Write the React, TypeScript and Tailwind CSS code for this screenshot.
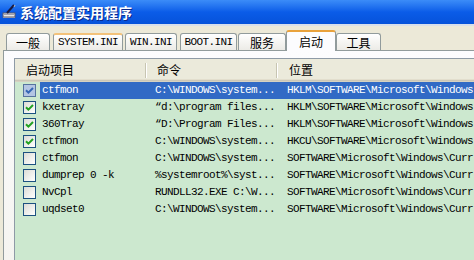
import React from "react";

type Row = { name: string; cmd: string; loc: string; checked: boolean; sel?: boolean };

const rows: Row[] = [
  { name: "ctfmon", cmd: "C:\\WINDOWS\\system...", loc: "HKLM\\SOFTWARE\\Microsoft\\Windows", checked: true, sel: true },
  { name: "kxetray", cmd: "\u201Cd:\\program files...", loc: "HKLM\\SOFTWARE\\Microsoft\\Windows", checked: true },
  { name: "360Tray", cmd: "\u201CD:\\Program Files...", loc: "HKLM\\SOFTWARE\\Microsoft\\Windows", checked: true },
  { name: "ctfmon", cmd: "C:\\WINDOWS\\system...", loc: "HKCU\\SOFTWARE\\Microsoft\\Windows", checked: true },
  { name: "ctfmon", cmd: "C:\\WINDOWS\\system...", loc: "SOFTWARE\\Microsoft\\Windows\\Curr", checked: false },
  { name: "dumprep 0 -k", cmd: "%systemroot%\\syst...", loc: "SOFTWARE\\Microsoft\\Windows\\Curr", checked: false },
  { name: "NvCpl", cmd: "RUNDLL32.EXE C:\\W...", loc: "SOFTWARE\\Microsoft\\Windows\\Curr", checked: false },
  { name: "uqdset0", cmd: "C:\\WINDOWS\\system...", loc: "SOFTWARE\\Microsoft\\Windows\\Curr", checked: false },
];

function CheckBox({ checked, sel }: { checked: boolean; sel?: boolean }) {
  return (
    <div
      className={
        sel
          ? "w-[13px] h-[13px] border border-[#56739f] bg-[#b3c5e3] flex items-center justify-center"
          : "w-[13px] h-[13px] border border-[#1c5180] bg-gradient-to-br from-[#dcdcd6] to-[#ffffff] flex items-center justify-center"
      }
    >
      {checked && (
        <svg width="9" height="9" viewBox="0 0 9 9">
          <path d="M1 4.2 L3.4 6.6 L8 2" stroke={sel ? "#3466b4" : "#21a121"} strokeWidth="2" fill="none" />
        </svg>
      )}
    </div>
  );
}

function TitleIcon() {
  return (
    <svg width="15" height="15" viewBox="0 0 15 15">
      <rect x="1" y="9" width="12" height="4" fill="#e8e8e8" stroke="#5a5a6a" strokeWidth="1" />
      <rect x="2" y="10" width="10" height="1" fill="#a0a0b0" />
      <path d="M12 1 L5 9" stroke="#1a1a40" strokeWidth="2" />
      <path d="M13 1 L12 3" stroke="#c0c0c0" strokeWidth="1" />
      <rect x="1" y="13" width="12" height="1" fill="#9090a0" />
    </svg>
  );
}

export default function App() {
  return (
    <div className="w-[474px] h-[260px] overflow-hidden bg-[#ece9d8] font-['Liberation_Mono','Noto_Sans_CJK_SC',monospace] text-black">
      {/* title bar */}
      <div className="h-[24px] flex items-center bg-gradient-to-b from-[#3b8cf8] via-[#0b5ce8] to-[#0652da]">
        <div className="ml-[2px] mt-[-2px] flex items-center">
          <TitleIcon />
        </div>
        <span className="ml-[3px] text-[14px] font-bold text-white leading-none font-['Noto_Sans_CJK_SC',sans-serif] [text-shadow:1px_1px_0_#0a2a8c]">
          系统配置实用程序
        </span>
      </div>
      <div className="h-[2px] bg-[#d9dfea]" />

      {/* tabs */}
      <div className="h-[24px] flex items-end text-[12px] leading-none">
        <div className="ml-[6px] w-[44px] h-[17px] border border-b-0 border-[#919b9c] rounded-t-[3px] bg-gradient-to-b from-[#ffffff] to-[#ecebe6] flex items-center justify-center pt-[1px] font-['Noto_Sans_CJK_SC',sans-serif]">
          一般
        </div>
        <div className="ml-[3px] w-[70px] h-[17px] border border-b-0 border-[#919b9c] border-t-2 border-t-[#f3c27a] rounded-t-[3px] bg-gradient-to-b from-[#ffffff] to-[#ecebe6] flex items-center justify-center tracking-[-0.6px] text-[11px]">
          SYSTEM.INI
        </div>
        <div className="ml-[2px] w-[52px] h-[17px] border border-b-0 border-[#919b9c] rounded-t-[3px] bg-gradient-to-b from-[#ffffff] to-[#ecebe6] flex items-center justify-center pt-[1px] tracking-[-0.6px] text-[11px]">
          WIN.INI
        </div>
        <div className="ml-[3px] w-[57px] h-[17px] border border-b-0 border-[#919b9c] rounded-t-[3px] bg-gradient-to-b from-[#ffffff] to-[#ecebe6] flex items-center justify-center pt-[1px] tracking-[-0.6px] text-[11px]">
          BOOT.INI
        </div>
        <div className="ml-[1px] w-[48px] h-[17px] border border-b-0 border-[#919b9c] rounded-t-[3px] bg-gradient-to-b from-[#ffffff] to-[#ecebe6] flex items-center justify-center pt-[1px] font-['Noto_Sans_CJK_SC',sans-serif]">
          服务
        </div>
        <div className="relative z-10 -mb-px w-[50px] h-[21px] border border-b-0 border-[#919b9c] border-t-2 border-t-[#e9a23c] rounded-t-[3px] bg-[#fcfcfe] flex items-center justify-center font-['Noto_Sans_CJK_SC',sans-serif]">
          启动
        </div>
        <div className="w-[45px] h-[17px] border border-b-0 border-[#919b9c] rounded-t-[3px] bg-gradient-to-b from-[#ffffff] to-[#ecebe6] flex items-center justify-center pt-[1px] font-['Noto_Sans_CJK_SC',sans-serif]">
          工具
        </div>
      </div>

      {/* panel */}
      <div className="ml-[3px] w-[520px] h-[240px] border border-[#919b9c] bg-gradient-to-b from-[#fcfcfe] to-[#f4f3ee] pl-[10px] pt-[7px]">
        <div className="w-[500px] h-[230px] border border-[#8e9aa6] bg-[#cce8cf]">
          {/* header */}
          <div className="h-[23px] flex bg-[#ebeadb] shadow-[inset_0_-1px_#d6d2c2,inset_0_-2px_#cbc7b8,inset_0_-3px_#e2decd] text-[12px] leading-none font-['Noto_Sans_CJK_SC',sans-serif]">
            <div className="w-[133px] flex items-center justify-between pl-[11px] pb-[1px]">
              <span>启动项目</span>
              <div className="w-[2px] h-[15px] border-l border-[#c7c5b2] bg-white mr-[1px]" />
            </div>
            <div className="w-[131px] flex items-center justify-between pl-[9px] pb-[1px]">
              <span>命令</span>
              <div className="w-[2px] h-[15px] border-l border-[#c7c5b2] bg-white mr-[1px]" />
            </div>
            <div className="flex items-center pl-[10px] pb-[1px]">
              <span>位置</span>
            </div>
          </div>

          {/* rows */}
          {rows.map((r, i) => (
            <div key={i} className="h-[17px] flex items-center text-[11px] tracking-[-0.6px] leading-none whitespace-nowrap">
              <div className="w-[25px] h-full flex items-center pl-[8px]">
                <CheckBox checked={r.checked} sel={r.sel} />
              </div>
              <div className={r.sel ? "flex-1 h-full flex items-center bg-[#316ac5] text-white" : "flex-1 h-full flex items-center"}>
                <div className="w-[108px] pl-[2px] overflow-hidden">{r.name}</div>
                <div className="w-[131px] pl-[7px] overflow-hidden">{r.cmd}</div>
                <div className="pl-[8px]">{r.loc}</div>
              </div>
            </div>
          ))}
        </div>
      </div>
    </div>
  );
}
